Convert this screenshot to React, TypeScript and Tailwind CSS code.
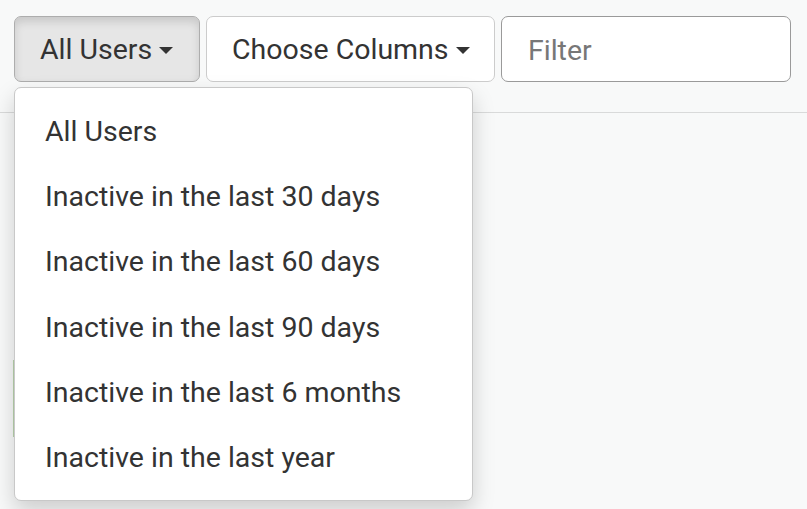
import { useState } from "react";

const FILTERS = [
  "All Users",
  "Inactive in the last 30 days",
  "Inactive in the last 60 days",
  "Inactive in the last 90 days",
  "Inactive in the last 6 months",
  "Inactive in the last year",
];

function Caret() {
  return (
    <span className="inline-block ml-[7px] w-0 h-0 border-l-[7.5px] border-r-[7.5px] border-t-[7.5px] border-l-transparent border-r-transparent border-t-[#333] align-middle" />
  );
}

export default function App() {
  const [selected, setSelected] = useState("All Users");

  return (
    <div className="min-h-[509px] bg-[#f8f9f9] text-[#333] font-['Roboto','Liberation_Sans',sans-serif]">
      <div className="h-[113px] border-b border-[#d9dada] pl-[14px] pt-[16px] flex items-start gap-[6px]">
        <div className="relative">
          <button className="w-[186px] h-[66px] flex items-center pl-[25px] pt-[2px] text-[28.5px] leading-none bg-[#e6e6e6] border border-[#adadad] rounded-[7px] shadow-[inset_0_5px_9px_rgba(0,0,0,0.125)]">
            {selected}
            <Caret />
          </button>

          <ul className="absolute top-[71px] left-0 w-[459px] py-[10px] bg-white border border-[#c8c8c8] rounded-[7px] shadow-[0_10px_22px_rgba(0,0,0,0.175)] z-10">
            {FILTERS.map((f) => (
              <li key={f}>
                <button
                  onClick={() => setSelected(f)}
                  className="w-full h-[65.3px] flex items-center pl-[30px] pt-[3px] text-[28.5px] leading-none text-left text-[#333] hover:bg-[#f5f5f5]"
                >
                  {f}
                </button>
              </li>
            ))}
          </ul>
        </div>

        <button className="w-[289px] h-[66px] flex items-center pl-[25px] pt-[2px] text-[28.5px] leading-none bg-white border border-[#cccccc] rounded-[7px]">
          Choose Columns
          <Caret />
        </button>

        <input
          placeholder="Filter"
          className="w-[290px] h-[66px] px-[26px] pt-[2px] text-[28.5px] bg-white border border-[#9a9a9a] rounded-[7px] placeholder:text-[#777] outline-none"
        />
      </div>

      <div className="pl-[13px] pt-[247px]">
        <div className="h-[77px] border-l-2 border-[#b9d3ad]" />
      </div>
    </div>
  );
}
